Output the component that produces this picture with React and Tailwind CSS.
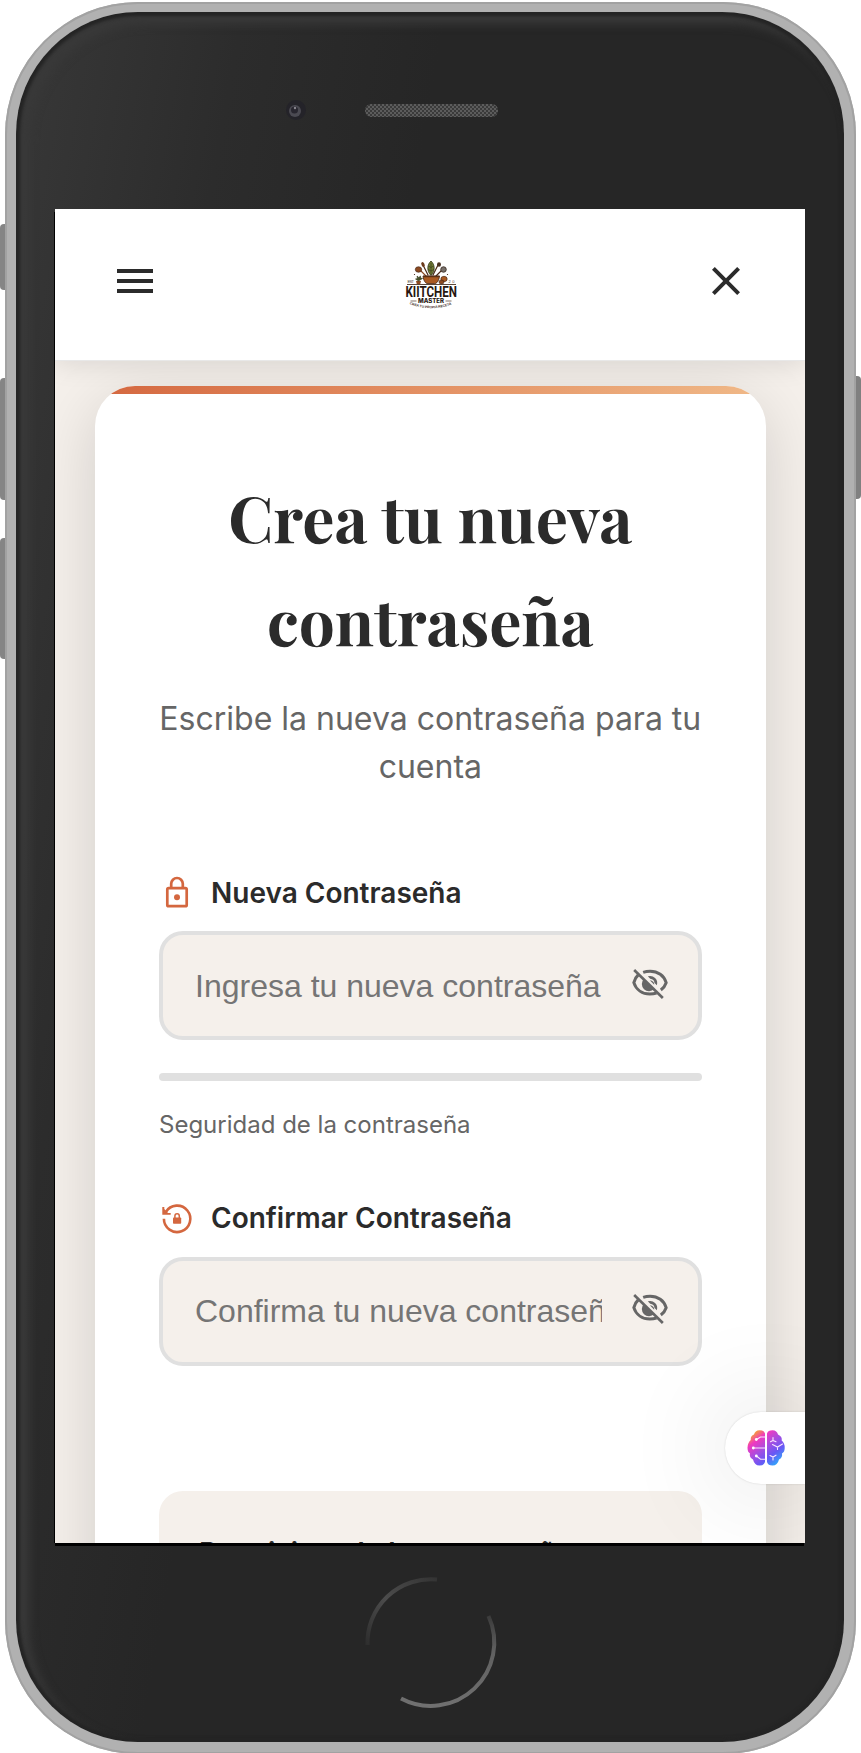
import { MdMenu, MdClose } from "react-icons/md";

function Logo() {
  return (
    <svg viewBox="0 0 100 90" className="mt-[8.500px] mr-[2px] h-[90px] w-[100px]">
      <g strokeLinecap="round" fill="none" stroke="#4a2a18" strokeWidth="1.2">
        <path d="M46 36l-6-6" stroke="#8a4a24" /><path d="M48 35l-4.500-9" />
        <path d="M53 35l5-10" /><path d="M56 36l6-6" />
      </g>
      <ellipse cx="38.500" cy="29.500" rx="3.200" ry="2.800" fill="#8c4a22" stroke="#3a2012" strokeWidth=".6" />
      <ellipse cx="43" cy="24.500" rx="1.500" ry="2.600" fill="#6b3a1c" transform="rotate(-25 43 24.500)" />
      <ellipse cx="59" cy="24.500" rx="2" ry="2.200" fill="#4a3322" />
      <ellipse cx="63.500" cy="29.500" rx="2.800" ry="2.800" fill="#77706a" stroke="#2b1b10" strokeWidth=".7" />
      <path d="M51 21c4 3.500 4.500 10 0 14.500-4.500-4.500-4-11 0-14.500z" fill="#6f7a35" stroke="#343818" strokeWidth=".8" />
      <path d="M51 23v12M48.500 26l2.500 1.500 2.500-1.500M48 29.500l3 1.500 3-1.500" stroke="#343818" strokeWidth=".6" fill="none" />
      <path d="M43 36h16.500c-.5 5-3 7.700-5 7.700h-6.500c-2.500 0-4.500-3-5-7.700z" fill="#a95a22" stroke="#3a2012" strokeWidth=".8" />
      <path d="M43 36.500h16.500" stroke="#5b3015" strokeWidth="1.500" />
      <path d="M36 41h5l-.8 3.200h-3.400z" fill="#8c4a22" />
      <path d="M38.500 41l-3-2 2-.5-.5-2.500 1.800 1.500 1.700-1.500v2l2 .5z" fill="#46512a" stroke="#2e3518" strokeWidth=".6" />
      <ellipse cx="64" cy="39" rx="3.200" ry="2.700" fill="#a95a22" stroke="#3a2012" strokeWidth=".6" />
      <ellipse cx="61.500" cy="42" rx="2.500" ry="2" fill="#8c4a22" stroke="#3a2012" strokeWidth=".6" />
      <path d="M27 44.500h49" stroke="#4a3325" strokeWidth=".9" />
      <circle cx="34.500" cy="34.500" r=".6" fill="#3a2012" /><circle cx="67.500" cy="34.500" r=".6" fill="#3a2012" />
      <text x="27.500" y="43" fontSize="4" fontFamily="Liberation Sans" fill="#4a3a32" textLength="6.500">EST</text>
      <text x="68.500" y="43" fontSize="4" fontFamily="Liberation Sans" fill="#4a3a32" textLength="6">20</text>
      <text x="25.500" y="57.300" fontSize="14.500" fontWeight="700" fontFamily="Roboto, sans-serif" fill="#27170f" textLength="51.500" lengthAdjust="spacingAndGlyphs">KIITCHEN</text>
      <text x="38" y="63" fontSize="5.600" fontWeight="800" fontFamily="Inter, sans-serif" fill="#27170f" textLength="26" lengthAdjust="spacingAndGlyphs">MASTER</text>
      <path d="M30.500 61h6M65.500 61h6" stroke="#4a3325" strokeWidth=".7" />
      <path id="tagline" d="M29.500 64Q51 72.500 73 64" fill="none" />
      <text fontSize="3.400" fontWeight="700" fontFamily="Liberation Sans" fill="#3b2a22"><textPath href="#tagline" textLength="43">CREA TU PROPIA RECETA</textPath></text>
    </svg>
  );
}

function Brain() {
  return (
    <svg viewBox="0 0 38 36" className="h-[36px] w-[38px]">
      <defs>
        <linearGradient id="brain" x1="5" y1="0" x2="32" y2="35" gradientUnits="userSpaceOnUse">
          <stop offset="0.04" stopColor="#f8b11c" /><stop offset=".25" stopColor="#f03abf" />
          <stop offset=".5" stopColor="#a44ee2" /><stop offset=".72" stopColor="#6857f5" /><stop offset="1" stopColor="#27b4fb" />
        </linearGradient>
      </defs>
      <path d="M18 3.500Q17 .3 12.500.3 8 .5 7 4.500 3.300 6 3.800 10 .4 13 .5 18q0 4 2.500 5.500Q2 27.500 6 29.500q1.500 6 6.500 6.100Q17 35.500 18 32z" fill="url(#brain)" />
      <path d="M20 3.500Q21 .3 25.500.3 30 .5 31 4.500q4.500 2 3.700 6Q37.800 13 37.700 18q0 4-2.700 5.500.8 4-3 6-1.500 6-6.500 6.100Q21 35.500 20 32z" fill="url(#brain)" />
      <g fill="none" stroke="#fbe5ff" strokeWidth="1.100" strokeLinecap="round">
        <path d="M9.500 9.500l4-2.500H18M6.500 18H18M9.500 26l4 3.200H18" />
        <path d="M26 7.500v3l-2.500 1.200M26 10.500l3 1.200M25.500 14.500l5 2.500 5-3M30.500 17v2.500M23 25.500l3 1.500 3-1.800M26 27v3" />
      </g>
      <g fill="#fff"><circle cx="9.300" cy="9.500" r="1.400" /><circle cx="6.300" cy="18" r="1.400" /><circle cx="9.300" cy="26" r="1.400" /></g>
    </svg>
  );
}

function EyeOff() {
  return (
    <svg viewBox="0 0 107 90" className="mr-[2px] mb-[4px] ml-auto h-[30px] w-[36px] text-[#666666]" fill="none" stroke="currentColor" strokeWidth="9">
      <path d="M33 10C40 7.500 47 6.500 54 6.500 77 6.500 96 20 102 41 99 50 94 57 86 63" />
      <path d="M18 18C11 24 7 32 5 41 12 63 31 75 53 75 60 75 67 74 73 72" />
      <path d="M6 3L92 87" strokeWidth="8" />
      <path d="M35 30A21.500 21.500 0 0 0 66 60Z" fill="currentColor" stroke="none" />
      <path d="M47 22A21.500 21.500 0 0 1 74 49L67 42A14 14 0 0 0 54 29Z" fill="currentColor" stroke="none" />
      <path d="M53 34L66 47Q67 36 53 34Z" fill="currentColor" stroke="none" />
    </svg>
  );
}

function LockIcon() {
  return (
    <svg viewBox="0 0 36 36" className="size-9 text-[#d4673f]" fill="none" stroke="currentColor" strokeWidth="2.700">
      <rect x="8.300" y="13.200" width="19.400" height="18" rx="1.300" />
      <path d="M12.200 13.200V8.800a5.800 5.800 0 0 1 11.600 0v4.400" />
      <circle cx="18" cy="22.200" r="3" fill="currentColor" stroke="none" />
    </svg>
  );
}

function ResetLockIcon() {
  return (
    <svg viewBox="0 0 36 36" className="size-9 text-[#d4673f]" fill="none" stroke="currentColor" strokeWidth="2.600">
      <path d="M6.800 12A13.200 13.200 0 1 1 4.900 18.800" />
      <path d="M3.300 7.100V14.800H11.700V13H9L5.300 9V7.100Z" fill="currentColor" stroke="none" />
      <rect x="14" y="17.500" width="8.200" height="6.300" rx=".8" fill="currentColor" stroke="none" />
      <path d="M15.900 18V16a2.200 2.200 0 0 1 4.400 0v2" strokeWidth="1.500" />
    </svg>
  );
}

function PasswordField({ placeholder }) {
  return (
    <div className="flex h-[109px] w-[543px] items-center rounded-[24px] border-4 border-[#e0e0e0] bg-[#f5f0eb] pr-7 pl-8">
      <div className="w-[407px] overflow-hidden font-['Liberation_Sans',Arial,sans-serif] text-[32px] leading-9 whitespace-nowrap text-[#757575]">{placeholder}</div>
      <EyeOff />
    </div>
  );
}

export default function App() {
  return (
    <div className="relative flex h-[1753px] w-[861px] justify-center overflow-hidden bg-white font-['Inter',sans-serif]">
      <div className="absolute top-[224px] left-0 h-[66px] w-[7px] rounded-l-sm bg-[#858585]" />
      <div className="absolute top-[378px] left-0 h-[122px] w-[7px] rounded-l-sm bg-[#858585]" />
      <div className="absolute top-[538px] left-0 h-[121px] w-[7px] rounded-l-sm bg-[#858585]" />
      <div className="absolute top-[376px] right-0 h-[123px] w-[7px] rounded-r-sm bg-[#808080]" />
      <div className="relative mt-[2px] h-[1752px] w-[851px] rounded-[133px] bg-[#b1b1b1] px-[11px] pt-[10px] shadow-[inset_0_0_0_2px_#a2a2a2]">
        <div className="h-[1730px] w-[828px] rounded-[122px] bg-[#262626] bg-[linear-gradient(100deg,#383838_0%,#2c2c2c_20%,#262626_38%)] px-[39px] pt-[197px] shadow-[inset_0_0_3px_4px_#242424,inset_9px_8px_10px_4px_#393939]">
          <div className="relative h-[1334px] w-[750px] overflow-hidden bg-[#f5f0eb]">
            <header className="relative z-10 flex h-[152px] items-center justify-between border-b border-[#e8e8e8] bg-white pr-[55px] pb-2 pl-14 shadow-[0_4px_24px_rgba(0,0,0,0.1)]">
              <MdMenu className="size-12 text-[#2b2b2b]" />
              <Logo />
              <MdClose className="size-12 text-[#2b2b2b]" />
            </header>
            <main className="relative mr-[39.400px] ml-10 mt-[25px] h-[1400px] overflow-visible rounded-[40px] bg-white shadow-[0_16px_64px_rgba(0,0,0,0.15)]">
              <div className="h-[1400px] overflow-hidden rounded-[40px]">
                <div className="h-2 bg-linear-to-r from-[#d4673f] to-[#f0b988]" />
                <div className="flex flex-col px-16 pt-[72.200px]">
                  <h1 className="text-center font-['Playfair_Display','Liberation_Serif',serif] text-[64px] leading-[102.400px] font-bold text-[#2b2b2b]">Crea tu nueva<br />contraseña</h1>
                  <p className="mt-6 text-center text-[32px] leading-[48px] whitespace-nowrap text-[#666666]">Escribe la nueva contraseña para tu<br />cuenta</p>
                  <div className="mt-[79.800px] flex h-[45px] items-center gap-4">
                    <LockIcon />
                    <span className="text-[28px] font-semibold text-[#2b2b2b]">Nueva Contraseña</span>
                  </div>
                  <div className="mt-[15.700px]"><PasswordField placeholder="Ingresa tu nueva contraseña" /></div>
                  <div className="mt-[32.500px] h-2 w-[543px] rounded-full bg-[#e0e0e0]" />
                  <div className="mt-[25px] text-2xl leading-[38px] text-[#666666]">Seguridad de la contraseña</div>
                  <div className="mt-[52px] flex h-[45px] items-center gap-4">
                    <ResetLockIcon />
                    <span className="text-[28px] font-semibold text-[#2b2b2b]">Confirmar Contraseña</span>
                  </div>
                  <div className="mt-[15.600px]"><PasswordField placeholder="Confirma tu nueva contraseña" /></div>
                  <div className="mt-[125px] h-[300px] w-[543px] rounded-[24px] bg-[#f5f0eb] px-10 pt-10">
                    <div className="text-[28px] leading-[45px] font-semibold text-[#2b2b2b]">Requisitos de la contraseña:</div>
                  </div>
                </div>
              </div>
            </main>
            <div className="absolute top-[1203px] right-0 z-20 flex h-[72px] w-20 items-center rounded-l-full bg-white pl-[22px] shadow-[0_0_2px_rgba(0,0,0,0.15),0_0_110px_rgba(0,0,0,0.16)]"><Brain /></div>
          </div>
        </div>
      </div>
      <svg className="absolute top-0 left-0 h-[1753px] w-[861px]" viewBox="0 0 861 1753">
        <defs>
          <pattern id="mesh" width="4" height="4" patternUnits="userSpaceOnUse"><rect width="4" height="4" fill="#5c5c5c" /><path d="M0 0h2v2H0zM2 2h2v2H2z" fill="#3a3a3a" /></pattern>
          <linearGradient id="arcA" x1="366" y1="1650" x2="437" y2="1577" gradientUnits="userSpaceOnUse"><stop offset="0" stopColor="#2b2b2b" /><stop offset=".5" stopColor="#4c4c4c" /><stop offset="1" stopColor="#333" /></linearGradient>
          <linearGradient id="arcB" x1="0" y1="1615" x2="0" y2="1705" gradientUnits="userSpaceOnUse"><stop offset="0" stopColor="#3a3a3a" /><stop offset=".4" stopColor="#606060" /><stop offset="1" stopColor="#707070" /></linearGradient>
        </defs>
        <rect x="365" y="104" width="133" height="13" rx="6" fill="url(#mesh)" />
        <circle cx="296" cy="110" r="10" fill="#242329" /><circle cx="295" cy="111" r="6" fill="#4b4a52" /><circle cx="294.500" cy="110" r="3.500" fill="#28262f" /><circle cx="295" cy="108" r="1.200" fill="#88858e" />
        <path d="M54.500 212V1543" stroke="#000" />
        <path d="M55 1544.500H804" stroke="#000" strokeWidth="3" />
        <path d="M367.500 1645A63.500 63.500 0 0 1 437 1579.500" fill="none" stroke="url(#arcA)" strokeWidth="4" />
        <path d="M488.500 1616A63.500 63.500 0 0 1 401 1698.500" fill="none" stroke="url(#arcB)" strokeWidth="4" />
      </svg>
    </div>
  );
}
